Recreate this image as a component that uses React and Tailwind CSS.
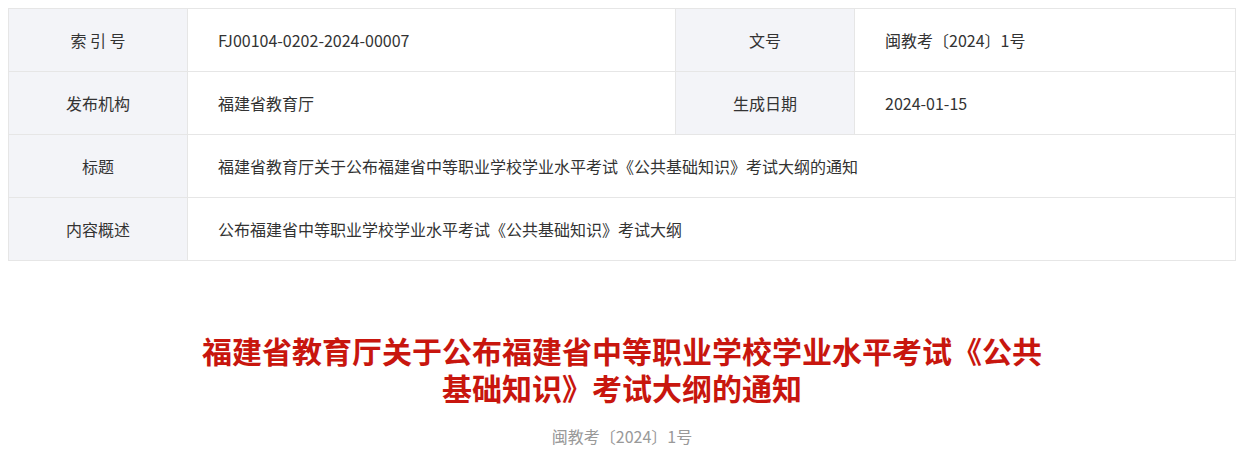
// App.jsx
const meta = [
  [
    { label: "索 引 号", value: "FJ00104-0202-2024-00007" },
    { label: "文号", value: "闽教考〔2024〕1号" },
  ],
  [
    { label: "发布机构", value: "福建省教育厅" },
    { label: "生成日期", value: "2024-01-15" },
  ],
];

const wide = [
  {
    label: "标题",
    value: "福建省教育厅关于公布福建省中等职业学校学业水平考试《公共基础知识》考试大纲的通知",
  },
  {
    label: "内容概述",
    value: "公布福建省中等职业学校学业水平考试《公共基础知识》考试大纲",
  },
];

const Label = ({ children }) => (
  <div className="h-[62px] box-content flex items-center justify-center bg-[#f3f4f8] border-r border-b border-[#e6e6e6] whitespace-pre">
    {children}
  </div>
);

const Value = ({ children, span }) => (
  <div
    className={
      "h-[62px] box-content flex items-center pl-[30px] border-r border-b border-[#e6e6e6] " +
      (span ? "col-span-3" : "")
    }
  >
    {children}
  </div>
);

const App = () => {
  return (
    <div
      className="min-h-screen bg-white p-2 text-[#333]"
      style={{ fontFamily: '"Noto Sans CJK SC", "Noto Sans", sans-serif' }}
    >
      <div className="w-[1228px]">
        <div className="grid grid-cols-[179px_488px_179px_1fr] border-l border-t border-[#e6e6e6] text-[16px]">
          {meta.map((row, i) =>
            row.map((cell, j) => [
              <Label key={`l${i}${j}`}>{cell.label}</Label>,
              <Value key={`v${i}${j}`}>{cell.value}</Value>,
            ])
          )}
          {wide.map((row) => [
            <Label key={row.label}>{row.label}</Label>,
            <Value key={row.label + "v"} span>
              {row.value}
            </Value>,
          ])}
        </div>

        <div className="mx-auto w-[860px] mt-[71px] text-center">
          <h1 className="text-[30px] leading-[37px] font-bold text-[#c8160e]">
            福建省教育厅关于公布福建省中等职业学校学业水平考试《公共基础知识》考试大纲的通知
          </h1>
          <p className="mt-[18px] text-[16px] leading-[24px] text-[#999]">闽教考〔2024〕1号</p>
        </div>
      </div>
    </div>
  );
};

export default App;
